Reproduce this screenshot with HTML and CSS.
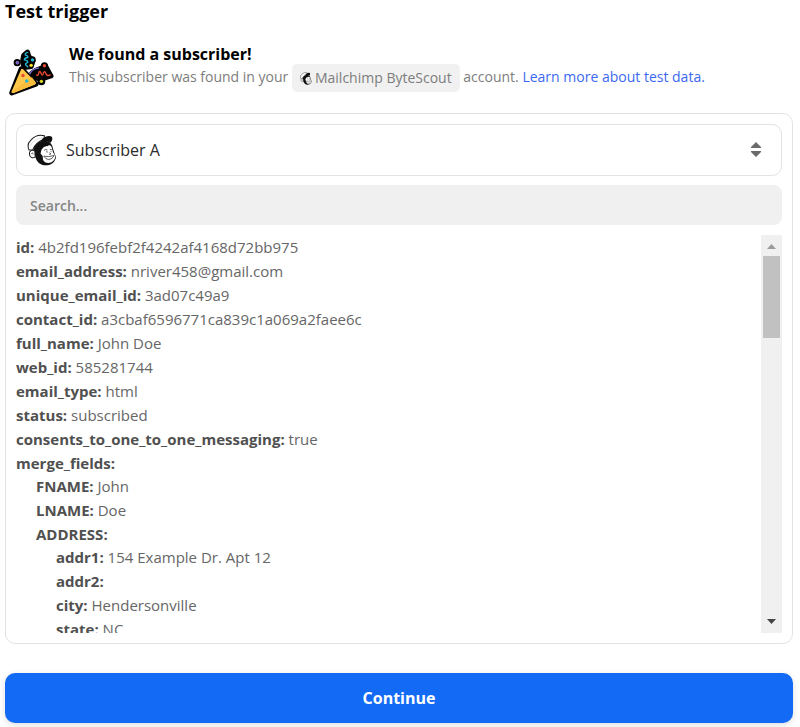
FILE: index.html
```html
<!DOCTYPE html>
<html lang="en">
<head>
<meta charset="utf-8">
<meta name="viewport" content="width=device-width, initial-scale=1">
<title>Test trigger</title>
<link rel="stylesheet" href="styles.css">
</head>
<body>
<svg width="0" height="0" class="sprite" aria-hidden="true">
  <symbol id="mailchimp" viewBox="82 88 88 94">
    <path d="M103 128C98 140 103 149 107 157C111 171 122 180 136 180C151 180 161 174 165 163C168 158 167 151 164 149L158 130C157 119 149 109 135 107C119 107 108 116 103 128Z" fill="#111"/>
    <path d="M128 130C133 123 139 126 145 122C151 119 155 126 156 133C158 141 160 147 165 151C166 159 161 167 154 171C146 175 135 174 130 166C127 160 130 156 127 151C122 147 121 146 123 140C124 134 126 133 128 130Z" fill="#fff"/>
    <path d="M88 135C83 124 85 113 94 105C104 94 119 89 133 93L132 105C118 107 104 119 99 134Z" fill="#fff" stroke="#1b1b1b" stroke-width="3"/>
    <path d="M91 124C97 110 110 101 131 99" fill="none" stroke="#aaa" stroke-width="1"/>
    <path d="M127 102C135 94 148 91 155 96C158 101 156 108 151 114C143 108 132 107 121 113Z" fill="#111"/>
    <path d="M105 138C97 132 88 138 89 147C89 156 98 161 106 156Z" fill="#fff" stroke="#1b1b1b" stroke-width="3"/>
    <path d="M95 147C96 142 101 143 100 148" fill="none" stroke="#1b1b1b" stroke-width="2"/>
    <path d="M132 136Q137 132 142 135M149 133L155 134M138 140L143 141M151 139L154 140M148 142L152 147L147 148" fill="none" stroke="#1b1b1b" stroke-width="2"/>
    <path d="M131 153Q145 157 162 151Q156 163 146 163Q137 163 131 153Z" fill="#fff" stroke="#1b1b1b" stroke-width="2"/>
  </symbol>
</svg>
<main class="page">
  <h1 class="title">Test trigger</h1>

  <section class="notice">
    <svg class="party" viewBox="24 25 141 141" aria-hidden="true">
      <g fill="#000" stroke="#000" stroke-width="15" stroke-linejoin="round" stroke-linecap="round">
        <path d="M66 86L109 131L38 157Z"/>
        <path d="M84 37L73 47L70 63L74 82L95 79L100 63L88 50Z"/>
        <path d="M97 99L109 91L129 83L137 78L144 91L153 107L129 115L105 113Z"/>
        <circle cx="54" cy="68" r="3"/><circle cx="98" cy="60" r="3"/><circle cx="134" cy="77" r="3"/><circle cx="125" cy="123" r="4"/>
      </g>
      <path d="M66 87Q68 84 72 88L107 124Q111 129 106 132L43 157Q36 159 38 151Z" fill="#ffc84a"/>
      <path d="M97 111L107 124Q111 129 106 132L43 157Q36 159 38 151L45 148Z" fill="#f9bd3d"/>
      <g fill="none" stroke-width="4" stroke-linejoin="round" stroke-linecap="round">
        <path d="M85 38Q76 40 78 46Q87 48 85 53Q75 54 75 60Q86 62 85 67Q77 70 79 75L85 80" stroke="#22b8d8"/>
        <path d="M91 101Q98 85 117 84" stroke="#7762c7"/>
        <path d="M111 104Q116 109 118 96Q121 91 124 99Q128 111 131 98Q134 91 138 99Q141 109 151 104" stroke="#e94a32"/>
      </g>
      <circle cx="55" cy="68" r="5" fill="#765dc5"/><circle cx="99" cy="60" r="5" fill="#22b8d8"/>
      <circle cx="95" cy="76" r="5" fill="#f5df27"/><circle cx="134" cy="77" r="5" fill="#e94a32"/>
      <circle cx="125" cy="123" r="5" fill="#d8d925"/><circle cx="71" cy="106" r="5" fill="#e94a32"/>
      <circle cx="82" cy="122" r="5" fill="#22b8d8"/>
    </svg>
    <div>
      <h2 class="found">We found a subscriber!</h2>
      <p class="detail">This subscriber was found in your <span class="chip"><svg class="chip-icon" aria-hidden="true"><use href="#mailchimp"/></svg>Mailchimp ByteScout</span> account. <a href="#">Learn more about test data.</a></p>
    </div>
  </section>

  <section class="card">
    <div class="picker">
      <svg class="picker-logo" aria-hidden="true"><use href="#mailchimp"/></svg>
      <select class="picker-select" aria-label="Subscriber"><option>Subscriber A</option></select>
      <svg class="picker-arrows" viewBox="0 0 10 16" aria-hidden="true"><path d="M5 0L10 5V6H0V5ZM5 15L10 10V9H0V10Z" fill="#6b6b6b"/></svg>
    </div>
    <input class="search" type="search" placeholder="Search..." aria-label="Search">
    <div class="viewer">
      <ul class="fields">
        <li><b>id:</b> 4b2fd196febf2f4242af4168d72bb975</li>
        <li><b>email_address:</b> nriver458@gmail.com</li>
        <li><b>unique_email_id:</b> 3ad07c49a9</li>
        <li><b>contact_id:</b> a3cbaf6596771ca839c1a069a2faee6c</li>
        <li><b>full_name:</b> John Doe</li>
        <li><b>web_id:</b> 585281744</li>
        <li><b>email_type:</b> html</li>
        <li><b>status:</b> subscribed</li>
        <li><b>consents_to_one_to_one_messaging:</b> true</li>
        <li><b>merge_fields:</b>
          <ul>
            <li><b>FNAME:</b> John</li>
            <li><b>LNAME:</b> Doe</li>
            <li><b>ADDRESS:</b>
              <ul>
                <li><b>addr1:</b> 154 Example Dr. Apt 12</li>
                <li><b>addr2:</b></li>
                <li><b>city:</b> Hendersonville</li>
                <li><b>state:</b> NC</li>
              </ul>
            </li>
          </ul>
        </li>
      </ul>
      <div class="scrollbar" aria-hidden="true">
        <svg class="scroll-arrow" viewBox="0 0 21 21"><path d="M6 14L10.500 9L15 14Z" fill="#9b9b9b"/></svg>
        <div class="thumb"></div>
        <svg class="scroll-arrow" viewBox="0 0 21 21"><path d="M6 7L10.500 12L15 7Z" fill="#444"/></svg>
      </div>
    </div>
  </section>

  <button class="continue" type="button">Continue</button>
</main>
</body>
</html>
```
FILE: styles.css
```css
* { box-sizing: border-box; }

body {
  margin: 0;
  background: #fff;
  color: #000;
  font: 14px/24px "Open Sans", "Noto Sans", sans-serif;
}

h1, h2, p, ul { margin: 0; padding: 0; }

.sprite { position: absolute; }

.page {
  display: flex;
  flex-direction: column;
  padding: 0 7px 4px 5px;
}

.title { font-size: 18px; line-height: 22px; font-weight: 700; }

.notice {
  display: flex;
  gap: 14px;
  margin-top: 22px;
  padding-left: 2px;
}

.party { width: 48px; height: 48px; margin-top: 4px; flex: none; }

.found { font-size: 16px; line-height: 20px; font-weight: 700; }

.detail { line-height: 26px; color: #7d7d7d; }
.detail a { color: #3b68f0; text-decoration: none; }

.chip {
  display: inline-flex;
  align-items: center;
  height: 28px;
  padding: 0 8px;
  border-radius: 5px;
  background: #f1f1f1;
  vertical-align: middle;
}

.chip-icon { width: 12px; height: 13px; margin-right: 3px; }

.card {
  margin-top: 17px;
  padding: 10px;
  border: 1px solid #e3e3e3;
  border-radius: 10px;
}

.picker {
  display: grid;
  align-items: center;
  height: 52px;
  border: 1px solid #e3e3e3;
  border-radius: 10px;
}

.picker > * { grid-area: 1 / 1; }

.picker-logo { width: 30px; height: 32px; margin-left: 10px; pointer-events: none; }

.picker-select {
  width: 100%;
  height: 100%;
  padding: 0 40px 0 49px;
  border: 0;
  border-radius: 10px;
  background: transparent;
  color: #2b2b2b;
  font: 500 16px "Open Sans", "Noto Sans", sans-serif;
  appearance: none;
}

.picker-arrows {
  justify-self: end;
  width: 10px;
  height: 16px;
  margin-right: 20px;
  pointer-events: none;
}

.search {
  display: block;
  width: 100%;
  height: 40px;
  margin-top: 9px;
  padding: 0 14px;
  border: 0;
  border-radius: 8px;
  background: #f0f0f0;
  font: 600 14px "Open Sans", "Noto Sans", sans-serif;
}

.search::placeholder { color: #858585; opacity: 1; }

.viewer { display: flex; height: 398px; margin-top: 10px; overflow: hidden; }

.fields {
  flex: 1;
  overflow: hidden;
  color: #666;
  font-size: 15px;
  list-style: none;
}

.fields ul { margin-top: -1px; padding-left: 20px; list-style: none; }
.fields b { color: #505050; font-weight: 700; }

.scrollbar {
  display: flex;
  flex-direction: column;
  width: 21px;
  background: #f0f0f0;
}

.scroll-arrow { width: 21px; height: 21px; }
.scroll-arrow:last-child { margin-top: auto; }
.thumb { height: 82px; margin: 0 2px; background: #c1c1c1; }

.continue {
  height: 50px;
  margin-top: 29px;
  border: 0;
  border-radius: 10px;
  background: #136bf5;
  box-shadow: 0 2px 6px #0002;
  color: #fff;
  font: 700 16px "Open Sans", "Noto Sans", sans-serif;
}
```
